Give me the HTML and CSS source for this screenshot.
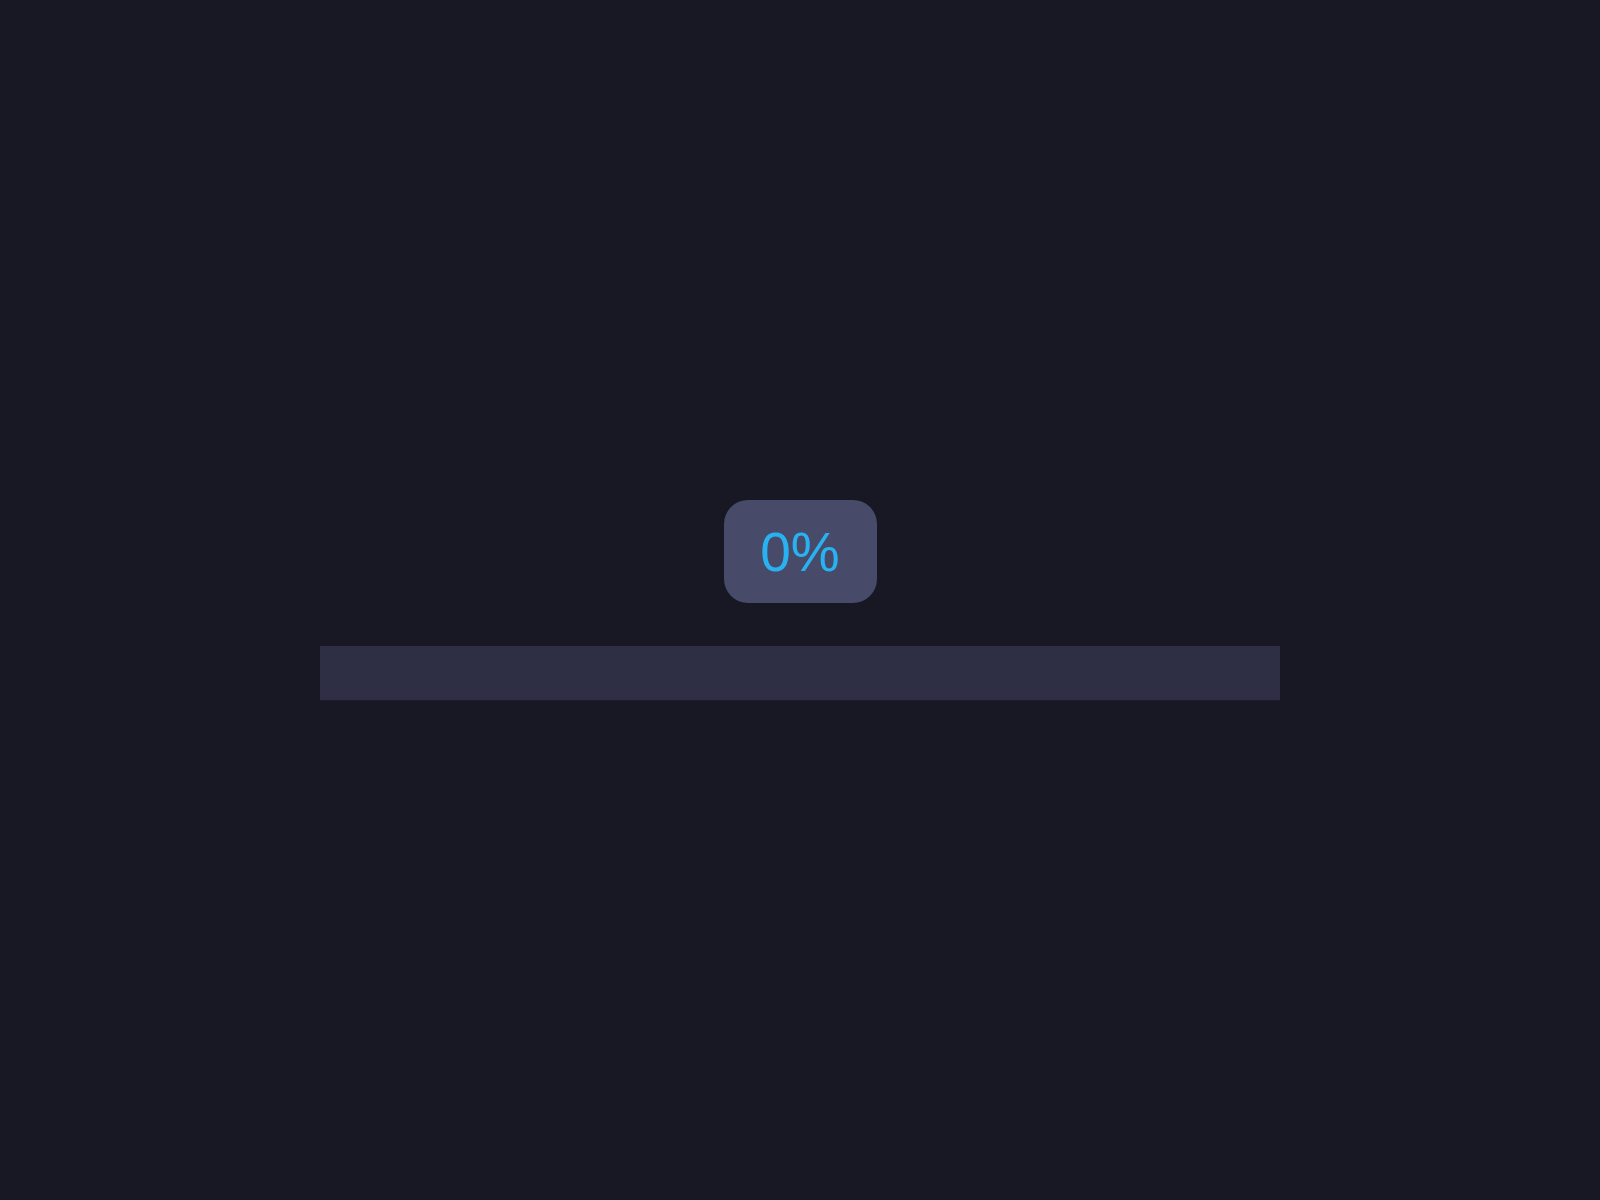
FILE: index.html
```html
<!DOCTYPE html>
<html lang="en">
<head>
    <meta charset="UTF-8">
    <meta name="viewport" content="width=device-width, initial-scale=1.0">
    <title>Progress</title>
    <link rel="stylesheet" href="styles.css">
</head>
<body>

    <div class="progress">
        <div class="percent" id="percent">0%</div>
        <div class="track">
            <div class="fill" id="fill"></div>
        </div>
    </div>

</body>
</html>
```

FILE: styles.css
```css
body {
    margin: 0;
    display: flex;
    justify-content: center;
    align-items: center;
    height: 100vh;
    background-color: #181724;
    font-family: 'Liberation Sans', Arial, sans-serif;
}
.progress {
    width: 960px;
    display: flex;
    flex-direction: column;
    align-items: center;
    gap: 43px;
}
.percent {
    height: 103px;
    width: 153px;
    display: flex;
    justify-content: center;
    align-items: center;
    background-color: #484a69;
    border-radius: 24px;
    color: #29b2f2;
    font-size: 55px;
}
.track {
    width: 100%;
    height: 54px;
    background-color: #2e2e45;
    box-shadow: 0 1px 0 #1b1c34;
}
.fill {
    width: 0;
    height: 100%;
    background-color: #29b2f2;
}
```
